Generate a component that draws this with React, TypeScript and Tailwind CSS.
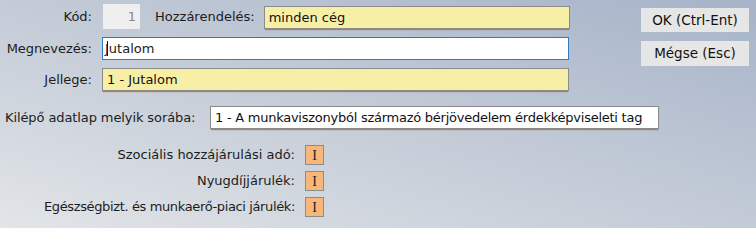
const field =
  "h-[23px] border border-[#8a8a8a] px-[4px] flex items-center text-[13px] text-[#111] shadow-[0_2px_1px_-1px_#c07a44]";

function Check() {
  return (
    <div className="flex h-[20px] w-[19px] items-center justify-center border border-[#8c8c8c] bg-[#f7b77a] text-[14px] text-[#222] [font-family:'Liberation_Serif',serif]">
      I
    </div>
  );
}

export default function App() {
  return (
    <div className="flex h-[228px] w-[756px] flex-col overflow-hidden whitespace-nowrap bg-[linear-gradient(to_top_right,#e2e5e8_0%,#c9d0da_40%,#a6b3c8_100%)] pt-[4px] text-[13px] text-[#1c1c1c] [font-family:'DejaVu_Sans',Verdana,sans-serif]">
      {/* top: main fields + buttons */}
      <div className="flex">
        <div className="flex flex-col">
          <div className="flex items-center">
            <span className="w-[92px] text-right">Kód:</span>
            <div className="ml-[11px] flex h-[25px] w-[37px] items-center justify-end bg-[#efefef] pr-[4px] text-[#888]">
              1
            </div>
            <span className="ml-[15px]">Hozzárendelés:</span>
            <div className={`${field} ml-[9px] mt-[2px] h-[22px] w-[306px] bg-[#f8efa6]`}>minden cég</div>
          </div>

          <div className="mt-[8px] flex items-center">
            <span className="w-[92px] text-right">Megnevezés:</span>
            <div className="ml-[10px] flex h-[23px] w-[467px] items-center border border-[#2f7ac4] bg-white px-[4px] text-[13px]">
              <span className="-mr-[3px] h-[15px] w-px bg-[#111]" />
              Jutalom
            </div>
          </div>

          <div className="mt-[8px] flex items-center">
            <span className="w-[92px] text-right">Jellege:</span>
            <div className={`${field} ml-[10px] w-[467px] bg-[#f8efa6]`}>1 - Jutalom</div>
          </div>
        </div>

        <div className="ml-auto mr-[7px] flex flex-col gap-[9px] pt-[4px]">
          <button className="h-[24px] w-[108px] bg-[#e6e6e6] text-[13.5px] text-[#111]">OK (Ctrl-Ent)</button>
          <button className="h-[25px] w-[108px] bg-[#e6e6e6] text-[13.5px] text-[#111]">Mégse (Esc)</button>
        </div>
      </div>

      {/* lower section */}
      <div className="mt-[15px] flex items-center">
        <span className="ml-[5px] w-[193px] tracking-[-0.1px]">Kilépő adatlap melyik sorába:</span>
        <div className={`${field} ml-[12px] w-[449px] overflow-hidden bg-white tracking-[-0.25px]`}>
          1 - A munkaviszonyból származó bérjövedelem érdekképviseleti tag
        </div>
      </div>

      <div className="mt-[16px] flex flex-col gap-[6px]">
        {[
          { t: "Szociális hozzájárulási adó:", c: "" },
          { t: "Nyugdíjjárulék:", c: "" },
          { t: "Egészségbizt. és munkaerő-piaci járulék:", c: "tracking-[-0.37px]" },
        ].map(({ t, c }) => (
          <div key={t} className="flex items-center">
            <span className={`w-[295px] text-right ${c}`}>{t}</span>
            <div className="ml-[10px]">
              <Check />
            </div>
          </div>
        ))}
      </div>
    </div>
  );
}
